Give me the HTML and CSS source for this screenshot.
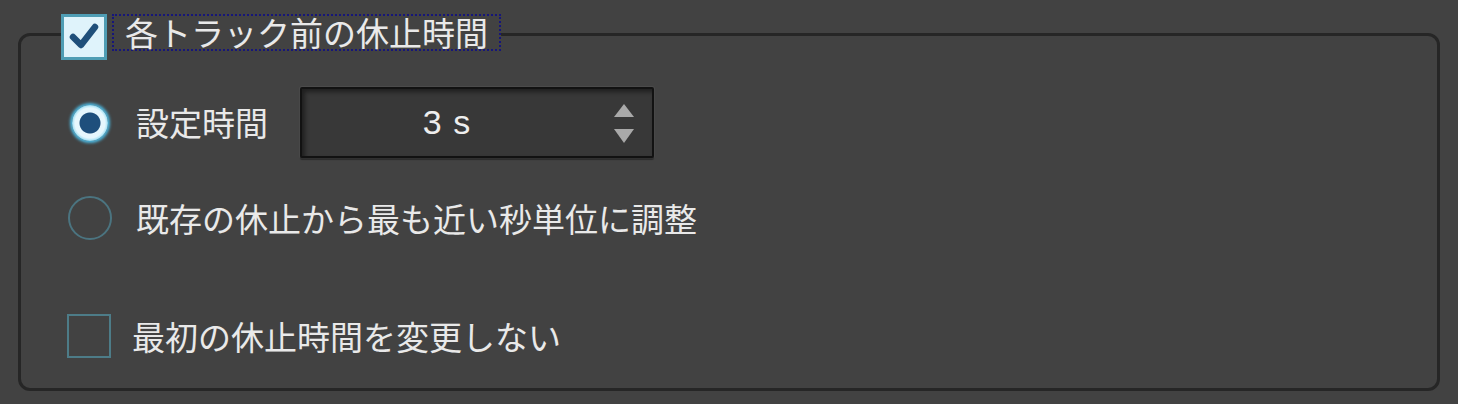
FILE: index.html
```html
<!DOCTYPE html>
<html lang="ja">
<head>
<meta charset="utf-8">
<title>休止時間</title>
<link rel="stylesheet" href="styles.css">
</head>
<body>
<fieldset class="group">
  <legend class="group-legend">
    <span class="check check-on">
      <svg viewBox="0 0 40 40" width="40" height="40" aria-hidden="true">
        <path d="M9 20 L17 28 L31 10" fill="none" stroke="#1f4f7a" stroke-width="6.5" stroke-linecap="round" stroke-linejoin="round"/>
      </svg>
    </span>
    <span class="focus-label">各トラック前の休止時間</span>
  </legend>

  <div class="row row-fixed">
    <span class="slot"><span class="radio radio-on"></span></span>
    <span class="label">設定時間</span>
    <div class="spin">
      <span class="spin-value">3 s</span>
      <span class="spin-arrows">
        <svg viewBox="0 0 20 40" width="20" height="40" aria-hidden="true">
          <path d="M10 0 L20 13 L0 13 Z" fill="#a9a9a9"/>
          <path d="M0 25 L20 25 L10 39 Z" fill="#a9a9a9"/>
        </svg>
      </span>
    </div>
  </div>

  <div class="row row-round">
    <span class="slot"><span class="radio"></span></span>
    <span class="label">既存の休止から最も近い秒単位に調整</span>
  </div>

  <div class="row row-first">
    <span class="check"></span>
    <span class="label label-check">最初の休止時間を変更しない</span>
  </div>
</fieldset>
</body>
</html>
```

FILE: styles.css
```css
html, body {
  margin: 0;
  padding: 0;
  background: #424242;
}

body {
  padding-top: 14px;
  height: 390px;
  font-family: "Noto Sans CJK JP", "Noto Sans", sans-serif;
  color: #e9e9e9;
}

/* group box with a checkable title */
.group {
  margin: 0 18px;
  padding: 32px 0 30px 46px;
  border: 3px solid #262626;
  border-radius: 12px;
  min-width: 0;
}

.group-legend {
  display: flex;
  align-items: flex-start;
  gap: 5px;
  height: 41px;
  padding: 0;
  margin-left: -6px;
}

.check {
  box-sizing: border-box;
  width: 44px;
  height: 44px;
  border: 2px solid #4d7c88;
  flex: none;
}

.check-on {
  width: 46px;
  height: 46px;
  border: 3px solid #4f9db4;
  background: #dff3fb;
  display: flex;
  align-items: center;
  justify-content: center;
}

.focus-label {
  box-sizing: border-box;
  height: 37px;
  padding: 0 11px;
  border: 2px dotted #16167a;
  font-size: 33px;
  line-height: 33px;
  white-space: nowrap;
}

.row {
  display: flex;
  align-items: center;
}

.row-fixed {
  height: 71px;
}

.row-round {
  height: 44px;
  margin-top: 38px;
}

.row-first {
  height: 44px;
  margin-top: 74px;
}

.slot {
  width: 46px;
  display: flex;
  justify-content: center;
  flex: none;
}

.radio {
  box-sizing: border-box;
  width: 44px;
  height: 44px;
  border-radius: 50%;
  border: 2px solid #4b7480;
}

.radio-on {
  width: 36px;
  height: 36px;
  border: none;
  background: radial-gradient(circle, #1e4f7c 0 10px, #e6f7fd 11px 15px, #b5e7f7 17px, #7fd1ee 18px);
  box-shadow: 0 0 3px 2px #4cb6de;
}

.label {
  margin-left: 23px;
  font-size: 33px;
  line-height: 1;
  white-space: nowrap;
}

.label-check {
  margin-left: 21px;
}

/* spin box */
.spin {
  box-sizing: border-box;
  margin-left: 32px;
  width: 354px;
  height: 71px;
  display: flex;
  align-items: center;
  background: #383838;
  border: 2px solid #121212;
  border-radius: 2px;
  box-shadow: inset 3px 3px 4px rgba(0, 0, 0, 0.45), 0 2px 1px rgba(0, 0, 0, 0.35), 0 0 0 1px #4b4b4b;
}

.spin-value {
  flex: 1;
  padding-left: 16px;
  text-align: center;
  font-family: "Liberation Sans", Arial, sans-serif;
  font-size: 34px;
  letter-spacing: 1px;
  color: #eeeeee;
}

.spin-arrows {
  width: 76px;
  box-sizing: border-box;
  display: flex;
  align-items: center;
  justify-content: flex-end;
  padding-right: 18px;
  padding-top: 2px;
}
```
